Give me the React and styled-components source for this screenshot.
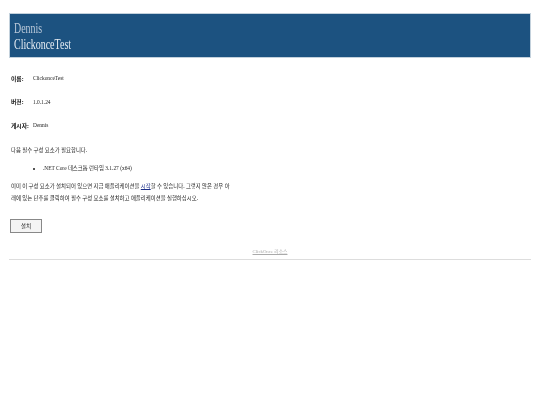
import styled, { createGlobalStyle } from "styled-components";

const GlobalStyle = createGlobalStyle`
  html, body {
    margin: 0;
    padding: 0;
    background: #fff;
  }
  body {
    font-family: "Liberation Serif", "Noto Sans CJK KR", serif;
    font-size: 5.4px;
    color: #1c1c1c;
  }
`;

const App = () => {
  return (
    <Page>
      <GlobalStyle />
      <Banner>
        <Publisher>Dennis</Publisher>
        <AppName>ClickonceTest</AppName>
      </Banner>

      <InfoList>
        <InfoRow>
          <InfoLabel>이름:</InfoLabel>
          <span>ClickonceTest</span>
        </InfoRow>
        <InfoRow>
          <InfoLabel>버전:</InfoLabel>
          <span>1.0.1.24</span>
        </InfoRow>
        <InfoRow>
          <InfoLabel>게시자:</InfoLabel>
          <span>Dennis</span>
        </InfoRow>
      </InfoList>

      <Intro>다음 필수 구성 요소가 필요합니다.</Intro>
      <Prereqs>
        <li>.NET Core 데스크톱 런타임 3.1.27 (x64)</li>
      </Prereqs>
      <Notice>
        이미 이 구성 요소가 설치되어 있으면 지금 애플리케이션을 <a href="#launch">시작</a>할 수 있습니다. 그렇지 않은 경우 아
        <br />
        래에 있는 단추를 클릭하여 필수 구성 요소를 설치하고 애플리케이션을 실행하십시오.
      </Notice>

      <InstallButton>설치</InstallButton>

      <Footer>
        <a href="#resources">ClickOnce 리소스</a>
      </Footer>
    </Page>
  );
};

export default App;

/* ---------------------------- Styled Components --------------------------- */

const Page = styled.div`
  box-sizing: border-box;
  width: 540px;
  height: 405px;
  padding: 13px 9px 0 9px;
  overflow: hidden;
  filter: blur(0.25px);
`;

const Banner = styled.div`
  box-sizing: border-box;
  height: 45px;
  padding: 7px 4px 0;
  background: #1c5280;
  border: 1px solid #c3d1dc;
  font-family: "Liberation Serif", serif;
`;

/* the banner type is tall and narrow in the reference */
const Publisher = styled.div`
  font-size: 14px;
  line-height: 15px;
  color: #b9c8d8;
  transform: scaleX(0.71);
  transform-origin: left center;
`;

const AppName = styled.div`
  font-size: 14.5px;
  line-height: 16px;
  color: #e6ecf2;
  transform: scaleX(0.69);
  transform-origin: left center;
`;

const InfoList = styled.div`
  display: flex;
  flex-direction: column;
  gap: 15.5px;
  margin-top: 16px;
  padding-left: 2px;
`;

const InfoRow = styled.div`
  display: flex;
  align-items: center;
  height: 8px;
`;

const InfoLabel = styled.b`
  width: 22px;
  font-family: "Noto Sans CJK KR", sans-serif;
  font-size: 5.8px;
  color: #111;
`;

const Intro = styled.p`
  margin: 16.5px 0 0 2px;
  line-height: 8px;
`;

const Prereqs = styled.ul`
  margin: 10px 0 0;
  padding-left: 34px;
  line-height: 8px;
`;

const Notice = styled.p`
  margin: 8.5px 0 0 2px;
  line-height: 12px;

  a {
    color: #1c2f8a;
  }
`;

const InstallButton = styled.button`
  display: block;
  box-sizing: border-box;
  width: 32px;
  height: 14px;
  margin: 14.5px 0 0 1px;
  padding: 0;
  background: #f4f4f4;
  border: 1px solid #888;
  font-family: "Noto Sans CJK KR", sans-serif;
  font-size: 5.6px;
  color: #222;
`;

const Footer = styled.div`
  margin-top: 15.5px;
  padding-bottom: 3px;
  border-bottom: 1px solid #ddd;
  text-align: center;
  font-size: 4.8px;
  line-height: 8px;

  a {
    color: #aaa;
  }
`;
